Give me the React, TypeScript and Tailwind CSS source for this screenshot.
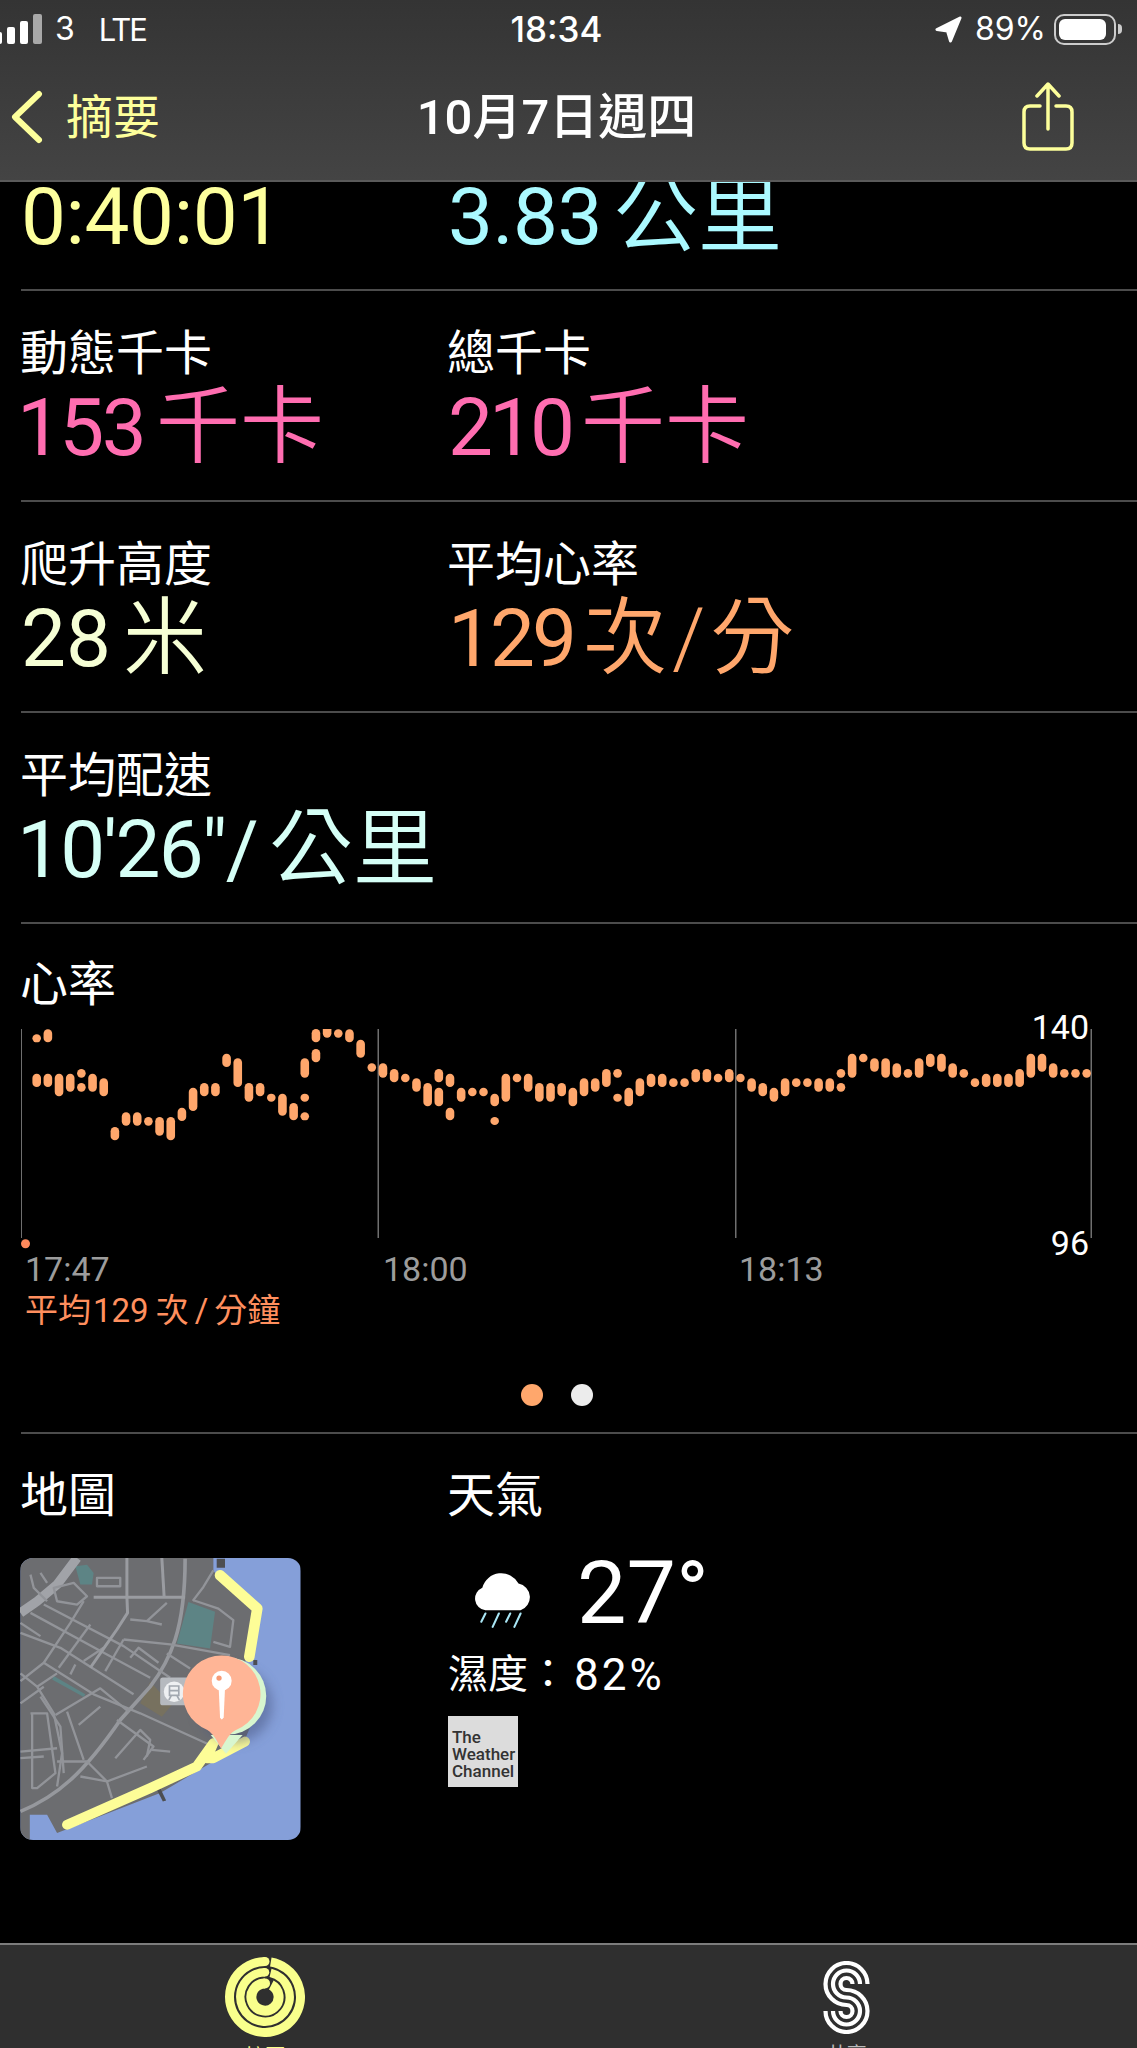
import React from "react";

// heart-rate samples: one entry per column, each segment is [top, bottom] in chart px * 3
const HEART_RATE: number[][][] = [
  [[100, 124], [218, 258]], [[85, 124], [218, 258]], [[218, 286]], [[218, 272]],
  [[204, 230], [246, 272]], [[218, 272]], [[232, 286]], [[378, 418]], [[334, 374]],
  [[334, 374]], [[348, 374]], [[348, 404]], [[348, 418]], [[320, 360]], [[260, 330]],
  [[246, 286]], [[246, 286]], [[158, 198]], [[172, 258]], [[246, 302]], [[246, 286]],
  [[278, 302]], [[278, 344]], [[306, 358]], [[172, 230], [278, 302], [334, 358]],
  [[84, 124], [144, 184]], [[70, 110]], [[85, 110]], [[85, 124]], [[116, 170]],
  [[187, 212]], [[187, 230]], [[204, 244]], [[218, 244]], [[232, 272]], [[246, 316]],
  [[204, 244], [260, 316]], [[218, 258], [320, 358]], [[260, 302]], [[260, 286]],
  [[260, 286]], [[278, 316], [348, 372]], [[218, 302]], [[218, 244]], [[218, 272]],
  [[246, 302]], [[246, 302]], [[246, 286]], [[260, 316]], [[232, 286]], [[232, 272]],
  [[204, 258]], [[204, 230], [278, 302]], [[260, 316]], [[232, 286]], [[218, 258]],
  [[218, 258]], [[232, 258]], [[232, 258]], [[204, 244]], [[204, 244]], [[218, 244]],
  [[204, 244]], [[218, 244]], [[232, 272]], [[246, 286]], [[260, 302]], [[232, 286]],
  [[232, 258]], [[232, 258]], [[232, 272]], [[232, 272]], [[204, 230], [246, 272]],
  [[158, 230]], [[158, 184]], [[172, 212]], [[172, 230]], [[187, 230]], [[204, 230]],
  [[172, 230]], [[158, 198]], [[158, 212]], [[187, 230]], [[204, 230]], [[232, 258]],
  [[218, 258]], [[218, 258]], [[218, 258]], [[204, 258]], [[158, 230]], [[158, 212]],
  [[187, 230]], [[204, 230]], [[204, 230]], [[204, 230]],
];

function Stat({ label, children, color }: { label?: string; children: React.ReactNode; color: string }) {
  return (
    <div>
      <div className="ml-[-1px] h-[50px] text-[48px] leading-[50px] text-white">{label}</div>
      <div className={`mt-[9px] flex h-[80px] items-center whitespace-nowrap text-[80px] leading-[80px] ${color}`}>
        {children}
      </div>
    </div>
  );
}

// digits next to CJK units, like the SF numerals in the screenshot
function Num({ children, className = "tracking-[-4px]" }: { children: React.ReactNode; className?: string }) {
  return <span className={`font-normal ${className}`}>{children}</span>;
}

function Unit({ children, className = "ml-[12px]" }: { children: React.ReactNode; className?: string }) {
  return <span className={`text-[84px] font-[350] ${className}`}>{children}</span>;
}

function StatRow({ children }: { children: React.ReactNode }) {
  return (
    <div className="ml-[21px] grid h-[211px] grid-cols-[427px_1fr] border-b-2 border-[#4c4c4c] pt-[38px]">
      {children}
    </div>
  );
}

function HeartChart() {
  return (
    <div className="relative h-[221px] w-[1090px]">
      <svg width="1090" height="221" className="block">
        {[0, 357, 714.5, 1070].map((x) => (
          <rect key={x} x={x - 0.5} y={0} width={1.5} height={209} fill="#6f6f6f" />
        ))}
        {HEART_RATE.map((segs, i) =>
          segs.map(([top, bottom]) => (
            <rect
              key={`${i}-${top}`}
              x={36.7 + i * 11.17 - 4.3 - 21}
              y={top / 3 + 1000 - 1028}
              width={8.6}
              height={(bottom - top) / 3}
              rx={4.3}
              fill="#ffa76c"
            />
          )),
        )}
        <circle cx={4.5} cy={214.7} r={4.5} fill="#ff8a5c" />
      </svg>
      <span className="absolute top-[-24px] right-[22px] text-[34px] leading-[44px] text-white">140</span>
      <span className="absolute top-[192px] right-[22px] text-[34px] leading-[44px] text-white">96</span>
    </div>
  );
}

function MapThumb() {
  const thin = [
    "M290 113H360V138H290Z", "M160 143L220 128L260 168L230 193L170 183Z", "M90 103L100 143L140 183M120 98L140 128",
    "M130 193L370 318L510 413", "M90 218L320 343L450 413", "M60 278L180 323L400 463",
    "M60 248L120 288", "M60 423L130 368L210 248L250 183", "M175 383L270 253", "M210 403L225 373M250 363L310 323",
    "M370 298L510 313L690 345", "M315 393L370 298", "M390 353L415 323L475 368", "M390 238L440 243L500 188M440 243L485 253",
    "M580 180L655 205L700 240L690 320L640 305", "M640 90L610 140L578 182",
    "M130 368L280 463L420 520L640 620", "M165 525L300 445L385 515", "M90 520H140L165 700L110 745H95V520",
    "M60 635L170 625M170 665L260 665L320 725L440 680", "M200 515L250 660M235 555L300 500",
    "M345 655L420 570L450 600L440 650", "M455 630L510 635", "M170 400L110 440L160 520L185 640L170 740",
    "M60 490L130 440M240 710L320 725L335 775", "M120 470L180 560L190 700", "M350 540L460 620L430 660",
    "M60 655L130 650M60 400L110 440", "M500 340L570 385",
  ];
  const main = [
    "M380 53V170L382 218L350 268L315 318L270 383", "M280 171H555", "M485 53L492 171",
  ];
  return (
    <svg width="281" height="282" viewBox="60 53 842 848" className="block rounded-[13px]">
      <defs>
        <filter id="pinshadow" x="-40%" y="-40%" width="180%" height="180%">
          <feGaussianBlur stdDeviation="18" />
        </filter>
      </defs>
      <rect x="60" y="53" width="842" height="848" fill="#859fd9" />
      <path d="M60 53H640V90L665 130L760 205L735 370L790 470L730 610L640 665L480 760L170 880L140 825H88V901H60Z" fill="#6c6d70" />
      <path d="M225 78L260 73L280 98L275 133L240 133ZM565 185L645 215L630 325L530 310ZM160 408L255 463L250 471L155 418Z" fill="#5d8485" />
      <path d="M450 425L515 495L485 530L420 490Z" fill="#77715f" />
      <path d="M60 218L110 183L170 133L230 53" fill="none" stroke="#a1a3a8" strokeWidth="28" />
      <path d="M60 815C170 770 250 700 360 540L450 440C510 360 555 270 555 55" fill="none" stroke="#96989d" strokeWidth="11" />
      {thin.map((d) => (
        <path key={d} d={d} fill="none" stroke="#929499" strokeWidth="7" strokeLinejoin="round" />
      ))}
      {main.map((d) => (
        <path key={d} d={d} fill="none" stroke="#9a9ca1" strokeWidth="9" strokeLinejoin="round" />
      ))}
      <path d="M650 55H675V82H650ZM480 745L498 782L488 785L470 750ZM760 360H772V375H760Z" fill="#4d4e51" />
      <path d="M660 105L772 205L748 350" fill="none" stroke="#fdfd97" strokeWidth="32" strokeLinecap="round" strokeLinejoin="round" />
      <path d="M200 855L450 745L590 680L640 610L620 655L640 655L735 605" fill="none" stroke="#fdfd97" strokeWidth="30" strokeLinecap="round" strokeLinejoin="round" />
      <rect x="480" y="412" width="90" height="84" rx="8" fill="#b6babf" />
      <circle cx="522" cy="455" r="31" fill="#eef0f2" />
      <path d="M508 438H536V466H508ZM508 452H536M514 466L506 480M530 466L538 480" fill="none" stroke="#a2a8b0" strokeWidth="5" />
      <circle cx="705" cy="495" r="112" fill="#46537e" opacity="0.5" filter="url(#pinshadow)" />
      <circle cx="683" cy="468" r="116" fill="#d8f6cf" />
      <path d="M632 585L678 642L728 585Z" fill="#d8f6cf" />
      <path d="M665 346A116 116 0 0 1 708 570C690 578 678 600 663 626C650 600 640 582 622 570A116 116 0 0 1 665 346Z" fill="#ffb596" />
      <circle cx="665" cy="422" r="30" fill="white" />
      <circle cx="657" cy="414" r="8" fill="#f79a75" />
      <path d="M656 445H675L671 532Q665 545 660 532Z" fill="white" />
    </svg>
  );
}

function ActivityRings() {
  const rings = [
    { r: 35.5, w: 9 },
    { r: 24.7, w: 8.5 },
    { r: 13.6, w: 10 },
  ];
  return (
    <svg width="80" height="80" viewBox="0 0 80 80" className="block" fill="none" stroke="#f9ff8c">
      {rings.map(({ r, w }) => {
        const sx = 41.8 + w / 2 - 0.5;
        const sy = 40 - Math.sqrt(r * r - (sx - 40) * (sx - 40));
        return (
          <g key={r}>
            <path d={`M${sx} ${sy}A${r} ${r} 0 1 1 40 ${40 - r}`} strokeWidth={w} />
            <circle cx={40} cy={40 - r} r={w / 2} fill="#f9ff8c" stroke="none" />
          </g>
        );
      })}
    </svg>
  );
}

function SharingIcon() {
  const strands: [number, number][] = [[21, 6], [13.5, 13.5], [6, 21]];
  return (
    <svg width="47" height="73" viewBox="0 0 47 73" className="block" fill="none" stroke="white" strokeWidth="4.2">
      {strands.map(([top, bottom]) => {
        const cy1 = 23;
        const cy2 = cy1 + top + bottom;
        return (
          <path
            key={top}
            d={`M${23.5 + top} ${cy1}A${top} ${top} 0 1 0 23.5 ${cy1 + top}A${bottom} ${bottom} 0 1 1 ${23.5 - bottom} ${cy2}`}
          />
        );
      })}
    </svg>
  );
}

export default function App() {
  return (
    <div className="flex h-[2048px] w-[1137px] flex-col overflow-hidden bg-black font-['Roboto','Noto_Sans_CJK_TC',sans-serif] text-white">
      {/* TOP BAR */}
      <header className="h-[182px] shrink-0 border-b-2 border-[#5a5a5a] bg-gradient-to-b from-[#343434] to-[#444444]">
        <div className="grid h-[58px] grid-cols-[1fr_auto_1fr] items-center pr-[15px] font-['Inter','Noto_Sans_CJK_TC',sans-serif]">
          <div className="flex items-center">
            <div className="ml-[-4px] flex h-[30px] items-end gap-[5px]">
              <span className="h-[12px] w-[6px] rounded-[2px] bg-white" />
              <span className="h-[17px] w-[8px] rounded-[2px] bg-white" />
              <span className="h-[23px] w-[8px] rounded-[2px] bg-white" />
              <span className="h-[30px] w-[9px] rounded-[2px] bg-[#a8a8a8]" />
            </div>
            <span className="ml-[13px] text-[32px] leading-none">3</span>
            <span className="ml-[24px] text-[31px] leading-none tracking-[-2px]">LTE</span>
          </div>
          <span className="ml-[-9px] text-[35px] leading-none font-medium">18:34</span>
          <div className="flex items-center justify-end">
            <svg width="27" height="27" viewBox="0 0 27 27" fill="white" stroke="white" strokeWidth="3" strokeLinejoin="round" className="mr-[13px]">
              <path d="M25 2L2 13.5L12.5 15L15.5 25Z" />
            </svg>
            <span className="text-[32px] leading-none">89%</span>
            <div className="ml-[8px] flex h-[31px] w-[62px] items-center rounded-[10px] border-2 border-[#cccccc] p-[3px]">
              <div className="h-full w-[47px] rounded-[6px] bg-white" />
            </div>
            <span className="ml-[2px] h-[10px] w-[4px] rounded-r-full bg-[#cccccc]" />
          </div>
        </div>
        <div className="grid h-[118px] grid-cols-[1fr_auto_1fr] items-center pr-[64px] pl-[11px]">
          <div className="flex items-center text-[#fdff9b]">
            <svg width="32" height="54" viewBox="0 0 32 54" fill="none" stroke="currentColor" strokeWidth="6" strokeLinecap="round" strokeLinejoin="round">
              <path d="M28 4L4 27L28 50" />
            </svg>
            <span className="ml-[23px] text-[47px] leading-none">摘要</span>
          </div>
          <span className="ml-[29px] text-[49px] leading-none font-medium">10月7日週四</span>
          <div className="flex justify-end">
            <svg width="52" height="70" viewBox="0 0 52 70" fill="none" stroke="#fdff9b" strokeWidth="3.5" strokeLinecap="round" strokeLinejoin="round" className="mt-[-1px] mr-[-1px]">
              <path d="M18 24H8Q2 24 2 30V61Q2 67 8 67H44Q50 67 50 61V30Q50 24 44 24H34" />
              <path d="M26 47V3M15 14L26 2L37 14" />
            </svg>
          </div>
        </div>
      </header>

      {/* SCROLLED CONTENT */}
      <main className="min-h-0 flex-1 overflow-hidden">
        <div className="mt-[-102px]">
          <StatRow>
            <Stat color="text-[#fdff9d]">
              <Num className="tracking-[-0.4px]">0:40:01</Num>
            </Stat>
            <Stat color="text-[#aaf9ff]">
              <Num className="tracking-[-0.5px]">3.83</Num>
              <Unit>公里</Unit>
            </Stat>
          </StatRow>
          <StatRow>
            <Stat label="動態千卡" color="text-[#ff6db0]">
              <Num className="ml-[-4px] tracking-[-2.6px]">153</Num>
              <Unit>千卡</Unit>
            </Stat>
            <Stat label="總千卡" color="text-[#ff6db0]">
              <Num>210</Num>
              <Unit className="ml-[10px]">千卡</Unit>
            </Stat>
          </StatRow>
          <StatRow>
            <Stat label="爬升高度" color="text-[#f6ffd5]">
              <Num className="tracking-[0px]">28</Num>
              <Unit>米</Unit>
            </Stat>
            <Stat label="平均心率" color="text-[#ffa76c]">
              <Num className="tracking-[-3px]">129</Num>
              <Unit className="ml-[9px]">
                次<span className="mx-[5px]">/</span>分
              </Unit>
            </Stat>
          </StatRow>
          <StatRow>
            <Stat label="平均配速" color="text-[#d5fff6]">
              <Num className="ml-[-4px] tracking-[-1.8px]">{"10'26\"/"}</Num>
              <Unit>公里</Unit>
            </Stat>
          </StatRow>

          {/* HEART RATE */}
          <section className="ml-[21px] h-[510px] border-b-2 border-[#4c4c4c] pt-[36px]">
            <div className="ml-[-1px] h-[50px] text-[48px] leading-[50px] text-white">心率</div>
            <div className="mt-[19px]">
              <HeartChart />
            </div>
            <div className="flex h-[40px] pl-[4px] text-[34px] leading-[38px] text-[#9c9c9c]">
              <span className="w-[358px]">17:47</span>
              <span className="w-[356px]">18:00</span>
              <span>18:13</span>
            </div>
            <div className="flex items-baseline pl-[4px] text-[33px] leading-[41px] text-[#ff8f5e]">
              <span>平均</span>
              <span className="ml-[2px]">129</span>
              <span className="ml-[7px]">次</span>
              <span className="mx-[6px]">/</span>
              <span>分鐘</span>
            </div>
            <div className="mt-[53px] flex justify-center gap-[28px] pr-[45px]">
              <span className="h-[22px] w-[22px] rounded-full bg-[#ffa76c]" />
              <span className="h-[22px] w-[22px] rounded-full bg-[#ececec]" />
            </div>
          </section>

          {/* MAP + WEATHER */}
          <section className="flex pt-[37px] pl-[20px]">
            <div className="w-[428px]">
              <div className="text-[48px] leading-[50px] text-white">地圖</div>
              <div className="mt-[37px]">
                <MapThumb />
              </div>
            </div>
            <div>
              <div className="ml-[-1px] text-[48px] leading-[50px] text-white">天氣</div>
              <div className="mt-[28px] flex items-start">
                <svg width="62" height="58" viewBox="0 0 60 56" className="mt-[21px] ml-[24px]">
                  <path d="M12 38A11.5 11.5 0 0 1 9 16A19 19 0 0 1 44 12A13.5 13.5 0 0 1 46 38Z" fill="white" transform="translate(1 1)" />
                  <path d="M13 42L9 50M26 42L20 55M37 42L33 50M47 42L41 55" stroke="#a9e6f5" strokeWidth="2" strokeLinecap="round" />
                </svg>
                <span className="ml-[43px] text-[88px] leading-[88px] font-normal">27°</span>
              </div>
              <div className="mt-[13px] flex items-center text-[40px] leading-[50px] text-white">
                <span>濕度：</span>
                <span className="ml-[6px] text-[44px] tracking-[3px]">82%</span>
              </div>
              <div className="mt-[16px] h-[71px] w-[70px] bg-[#dcdcdc] pt-[13px] pl-[4px] text-[17px] leading-[17px] font-medium text-[#333333]">
                <div>The</div>
                <div>Weather</div>
                <div>Channel</div>
              </div>
            </div>
          </section>
        </div>
      </main>

      {/* TAB BAR */}
      <footer className="flex h-[105px] shrink-0 overflow-hidden border-t-2 border-[#7c7c7c] bg-[#2f2f2f]">
        <div className="flex flex-1 flex-col items-center pt-[12px]">
          <div className="ml-[-38px]">
            <ActivityRings />
            <div className="mt-[8px] text-center text-[20px] leading-[24px] text-[#fbff8c]">摘要</div>
          </div>
        </div>
        <div className="flex flex-1 flex-col items-center pt-[16px]">
          <div className="mr-[12px]">
            <SharingIcon />
            <div className="mt-[9px] text-center text-[20px] leading-[24px] text-[#bbbbbb]">共享</div>
          </div>
        </div>
      </footer>
    </div>
  );
}
